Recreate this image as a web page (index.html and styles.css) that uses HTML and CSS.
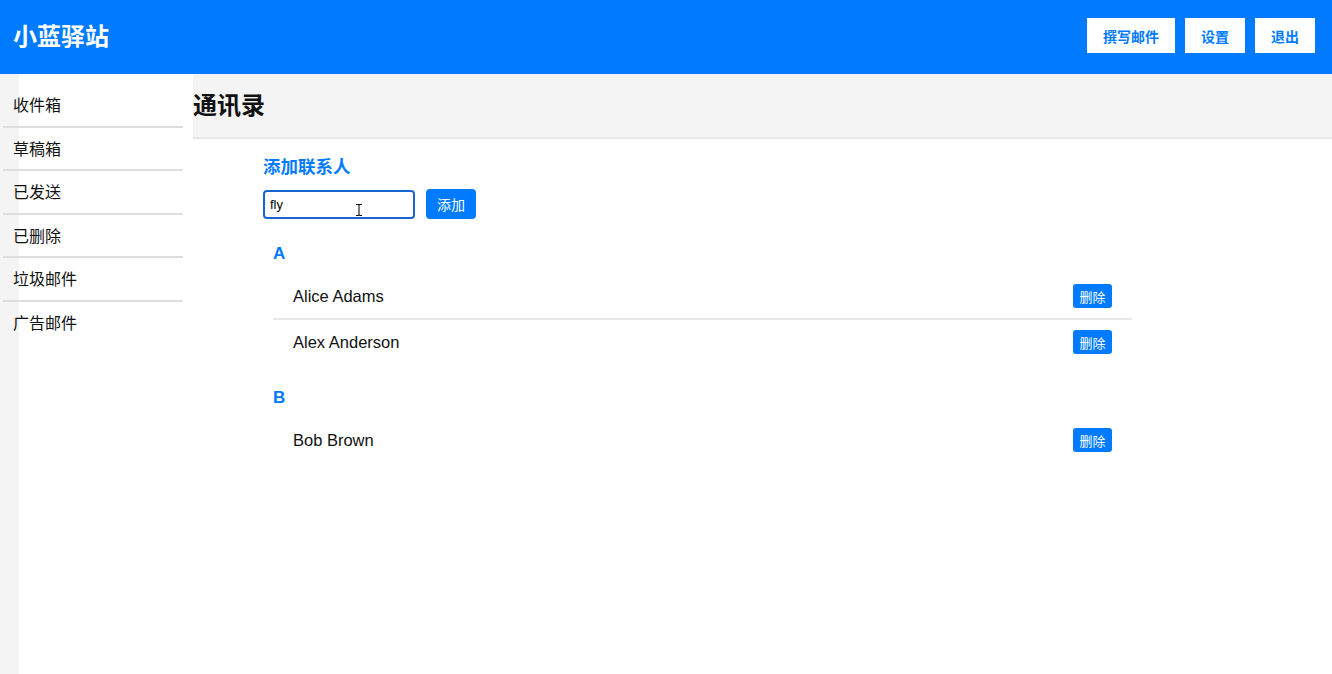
FILE: index.html
```html
<!DOCTYPE html>
<html lang="zh-CN">
<head>
<meta charset="utf-8">
<title>小蓝驿站</title>
<link rel="stylesheet" href="styles.css">
</head>
<body>
<header class="topbar">
  <div class="brand">小蓝驿站</div>
  <nav class="top-actions">
    <button class="top-btn">撰写邮件</button>
    <button class="top-btn">设置</button>
    <button class="top-btn">退出</button>
  </nav>
</header>
<div class="layout">
  <aside class="sidebar">
    <ul class="menu">
      <li class="menu-item">收件箱</li>
      <li class="menu-item">草稿箱</li>
      <li class="menu-item">已发送</li>
      <li class="menu-item">已删除</li>
      <li class="menu-item">垃圾邮件</li>
      <li class="menu-item">广告邮件</li>
    </ul>
  </aside>
  <main class="main">
    <div class="page-head">通讯录</div>
    <section class="content">
      <h2 class="add-title">添加联系人</h2>
      <div class="add-row">
        <div class="input-wrap">
          <input class="add-input" type="text" value="fly">
          <svg class="ibeam" width="8" height="14" viewBox="0 0 8 14"><path d="M1 1.5h2.2M4.8 1.5H7M4 2v10M1 12.5h2.2M4.8 12.5H7M3.2 1.5L4 2.3L4.8 1.5M3.2 12.5L4 11.7L4.8 12.5" stroke="#111" stroke-width="1.1" fill="none"/></svg>
        </div>
        <button class="add-btn">添加</button>
      </div>
      <div class="contacts">
        <div class="group">
          <div class="letter">A</div>
          <div class="row"><span class="name">Alice Adams</span><button class="del-btn">删除</button></div>
          <div class="row"><span class="name">Alex Anderson</span><button class="del-btn">删除</button></div>
        </div>
        <div class="group">
          <div class="letter">B</div>
          <div class="row"><span class="name">Bob Brown</span><button class="del-btn">删除</button></div>
        </div>
      </div>
    </section>
  </main>
</div>
</body>
</html>
```
FILE: styles.css
```css
* { box-sizing: border-box; }
html, body { margin: 0; padding: 0; height: 100%; }
body {
  font-family: "Liberation Sans", "Noto Sans CJK SC", sans-serif;
  color: #111;
  background: #fff;
  display: flex;
  flex-direction: column;
}
button { font-family: inherit; cursor: pointer; }

.topbar {
  height: 74px;
  flex: none;
  background: #007bff;
  display: flex;
  align-items: center;
  justify-content: space-between;
  padding: 0 17px 0 13px;
}
.brand {
  color: #fff;
  font-size: 24px;
  font-weight: 700;
  line-height: 28px;
  margin-top: 0;
}
.top-actions { display: flex; gap: 10px; margin-top: -3px; }
.top-btn {
  height: 35px;
  padding: 0 16px;
  border: none;
  border-radius: 0;
  background: #fff;
  color: #007bff;
  font-size: 14px;
  font-weight: 700;
}

.layout { flex: 1; display: flex; min-height: 0; }
.sidebar {
  width: 193px;
  flex: none;
  background: linear-gradient(to right, #f4f4f4 19px, transparent 19px);
}
.menu {
  list-style: none;
  margin: 10px 0 0 3px;
  padding: 0;
  width: 180px;
}
.menu-item {
  padding: 11px 10px 9px;
  line-height: 21.6px;
  font-size: 16px;
  border-bottom: 2px solid #dedede;
}
.menu-item:last-child { border-bottom: none; }

.main { flex: 1; display: flex; flex-direction: column; }
.page-head {
  height: 65px;
  background: #f4f4f4;
  border-bottom: 2px solid #e7e7e7;
  font-size: 24px;
  font-weight: 700;
  line-height: 64px;
  padding-left: 0;
}
.content { padding: 17px 0 0 70px; }
.add-title {
  margin: 0;
  font-size: 17.5px;
  line-height: 22px;
  font-weight: 700;
  color: #007bff;
}
.add-row { display: flex; align-items: center; gap: 11px; margin-top: 11px; }
.input-wrap { position: relative; }
.add-input {
  width: 152px;
  height: 29px;
  border: 2px solid #1766d0;
  border-radius: 4px;
  padding: 0 5px;
  font-family: "Liberation Sans", sans-serif;
  font-size: 13px;
  color: #000;
  outline: none;
  display: block;
}
.ibeam { position: absolute; left: 92px; top: 13px; }
.add-btn {
  height: 30px;
  padding: 0 11px;
  border: none;
  border-radius: 4px;
  background: #007bff;
  color: #fff;
  font-size: 14px;
}

.contacts { margin: 25px 0 0 10px; width: 859px; }
.group { margin-bottom: 24px; }
.letter {
  font-size: 17px;
  font-weight: 700;
  color: #007bff;
  line-height: 20px;
  margin-bottom: 10px;
}
.row {
  height: 46px;
  display: flex;
  align-items: center;
  justify-content: space-between;
  padding: 0 20px;
  border-bottom: 2px solid #e8e8e8;
}
.row:last-child { border-bottom: none; height: 44px; }
.name { font-size: 16.5px; }
.del-btn {
  height: 24px;
  padding: 0 6.5px;
  border: none;
  border-radius: 3px;
  background: #007bff;
  color: #fff;
  font-size: 13px;
}
```
